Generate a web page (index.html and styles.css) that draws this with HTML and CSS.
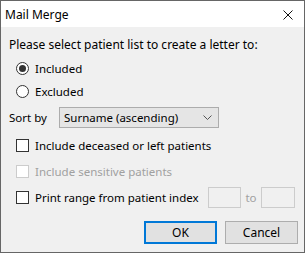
FILE: index.html
```html
<!DOCTYPE html>
<html lang="en">
<head>
  <meta charset="UTF-8" />
  <title>Mail Merge</title>
  <link rel="stylesheet" href="styles.css">
</head>
<body>

  <div class="dialog">

    <!-- Title bar -->
    <div class="titlebar">
      <span class="title">Mail Merge</span>
      <svg class="close" width="10" height="10" viewBox="0 0 10 10" aria-label="Close">
        <path d="M0.5 0.5 L9.5 9.5 M9.5 0.5 L0.5 9.5" stroke="#111" stroke-width="1" fill="none"/>
      </svg>
    </div>

    <div class="content">
      <div class="row intro">Please select patient list to create a letter to:</div>

      <div class="row option radio-row first">
        <span class="radio checked"></span>
        <span>Included</span>
      </div>
      <div class="row option radio-row">
        <span class="radio"></span>
        <span>Excluded</span>
      </div>

      <div class="row sort-row">
        <span class="sort-label">Sort by</span>
        <div class="select">
          <span>Surname (ascending)</span>
          <svg class="chevron" width="9" height="5" viewBox="0 0 9 5">
            <path d="M0.5 0.5 L4.5 4.5 L8.5 0.5" stroke="#555" stroke-width="1" fill="none"/>
          </svg>
        </div>
      </div>

      <div class="row option check-row first-check">
        <span class="checkbox"></span>
        <span>Include deceased or left patients</span>
      </div>
      <div class="row option check-row disabled">
        <span class="checkbox"></span>
        <span>Include sensitive patients</span>
      </div>
      <div class="row option range-row">
        <span class="checkbox"></span>
        <span>Print range from patient index</span>
        <div class="range">
          <span class="field first-field"></span>
          <span class="to">to</span>
          <span class="field"></span>
        </div>
      </div>

      <div class="buttons">
        <button class="btn default">OK</button>
        <button class="btn">Cancel</button>
      </div>
    </div>

  </div>

</body>
</html>
```

FILE: styles.css
```css
* {
  box-sizing: border-box;
  margin: 0;
  padding: 0;
}

body {
  background: #f0f0f0;
  font-family: 'Noto Sans', 'Open Sans', sans-serif;
  font-size: 11.5px;
  color: #000;
  white-space: nowrap;
}

.dialog {
  width: 305px;
  height: 253px;
  border: 1px solid #666;
  background: #f0f0f0;
}

/* Title bar */
.titlebar {
  height: 26px;
  background: #fff;
  display: flex;
  align-items: center;
  justify-content: space-between;
  padding: 0 11px 0 4px;
}

.title {
  font-size: 12px;
}

.close {
  display: block;
  margin-top: 1px;
}

/* Body */
.content {
  padding: 0 6px 0 8px;
}

.row {
  display: flex;
  align-items: center;
}

.intro {
  height: 18px;
  margin-top: 8px;
  font-size: 12px;
}

.option {
  padding-left: 7px;
  gap: 6px;
}

.radio-row {
  height: 20px;
  margin-top: 3px;
}

.radio-row.first {
  margin-top: 5px;
}

.radio {
  width: 13px;
  height: 13px;
  border: 1px solid #333;
  border-radius: 50%;
  background: #fff;
  display: flex;
  align-items: center;
  justify-content: center;
  flex: none;
}

.radio.checked::after {
  content: "";
  width: 7px;
  height: 7px;
  border-radius: 50%;
  background: #333;
}

/* Sort */
.sort-row {
  height: 21px;
  margin-top: 6px;
}

.sort-label {
  width: 50px;
}

.select {
  width: 160px;
  height: 21px;
  background: #e5e5e5;
  border: 1px solid #acacac;
  display: flex;
  align-items: center;
  justify-content: space-between;
  padding: 0 6px 0 4px;
}

.chevron {
  display: block;
}

/* Checkboxes */
.check-row {
  height: 20px;
  margin-top: 6px;
}

.check-row.first-check {
  margin-top: 7px;
}

.checkbox {
  width: 13px;
  height: 13px;
  border: 1px solid #333;
  background: #fff;
  flex: none;
}

.disabled {
  color: #a0a0a0;
}

.disabled .checkbox {
  border-color: #cccccc;
}

.range-row {
  height: 21px;
  margin-top: 6px;
  padding-right: 3px;
}

.range {
  margin-left: auto;
  display: flex;
  align-items: center;
}

.field {
  width: 34px;
  height: 21px;
  border: 1px solid #cccccc;
  background: #f0f0f0;
}

.first-field {
  width: 33px;
}

.to {
  width: 20px;
  text-align: center;
  color: #a0a0a0;
}

/* Buttons */
.buttons {
  display: flex;
  justify-content: flex-end;
  gap: 8px;
  margin-top: 13px;
}

.btn {
  width: 73px;
  height: 23px;
  background: #e1e1e1;
  border: 1px solid #adadad;
  font-family: inherit;
  font-size: 12px;
  color: #000;
}

.btn.default {
  border: 2px solid #0078d7;
}
```
